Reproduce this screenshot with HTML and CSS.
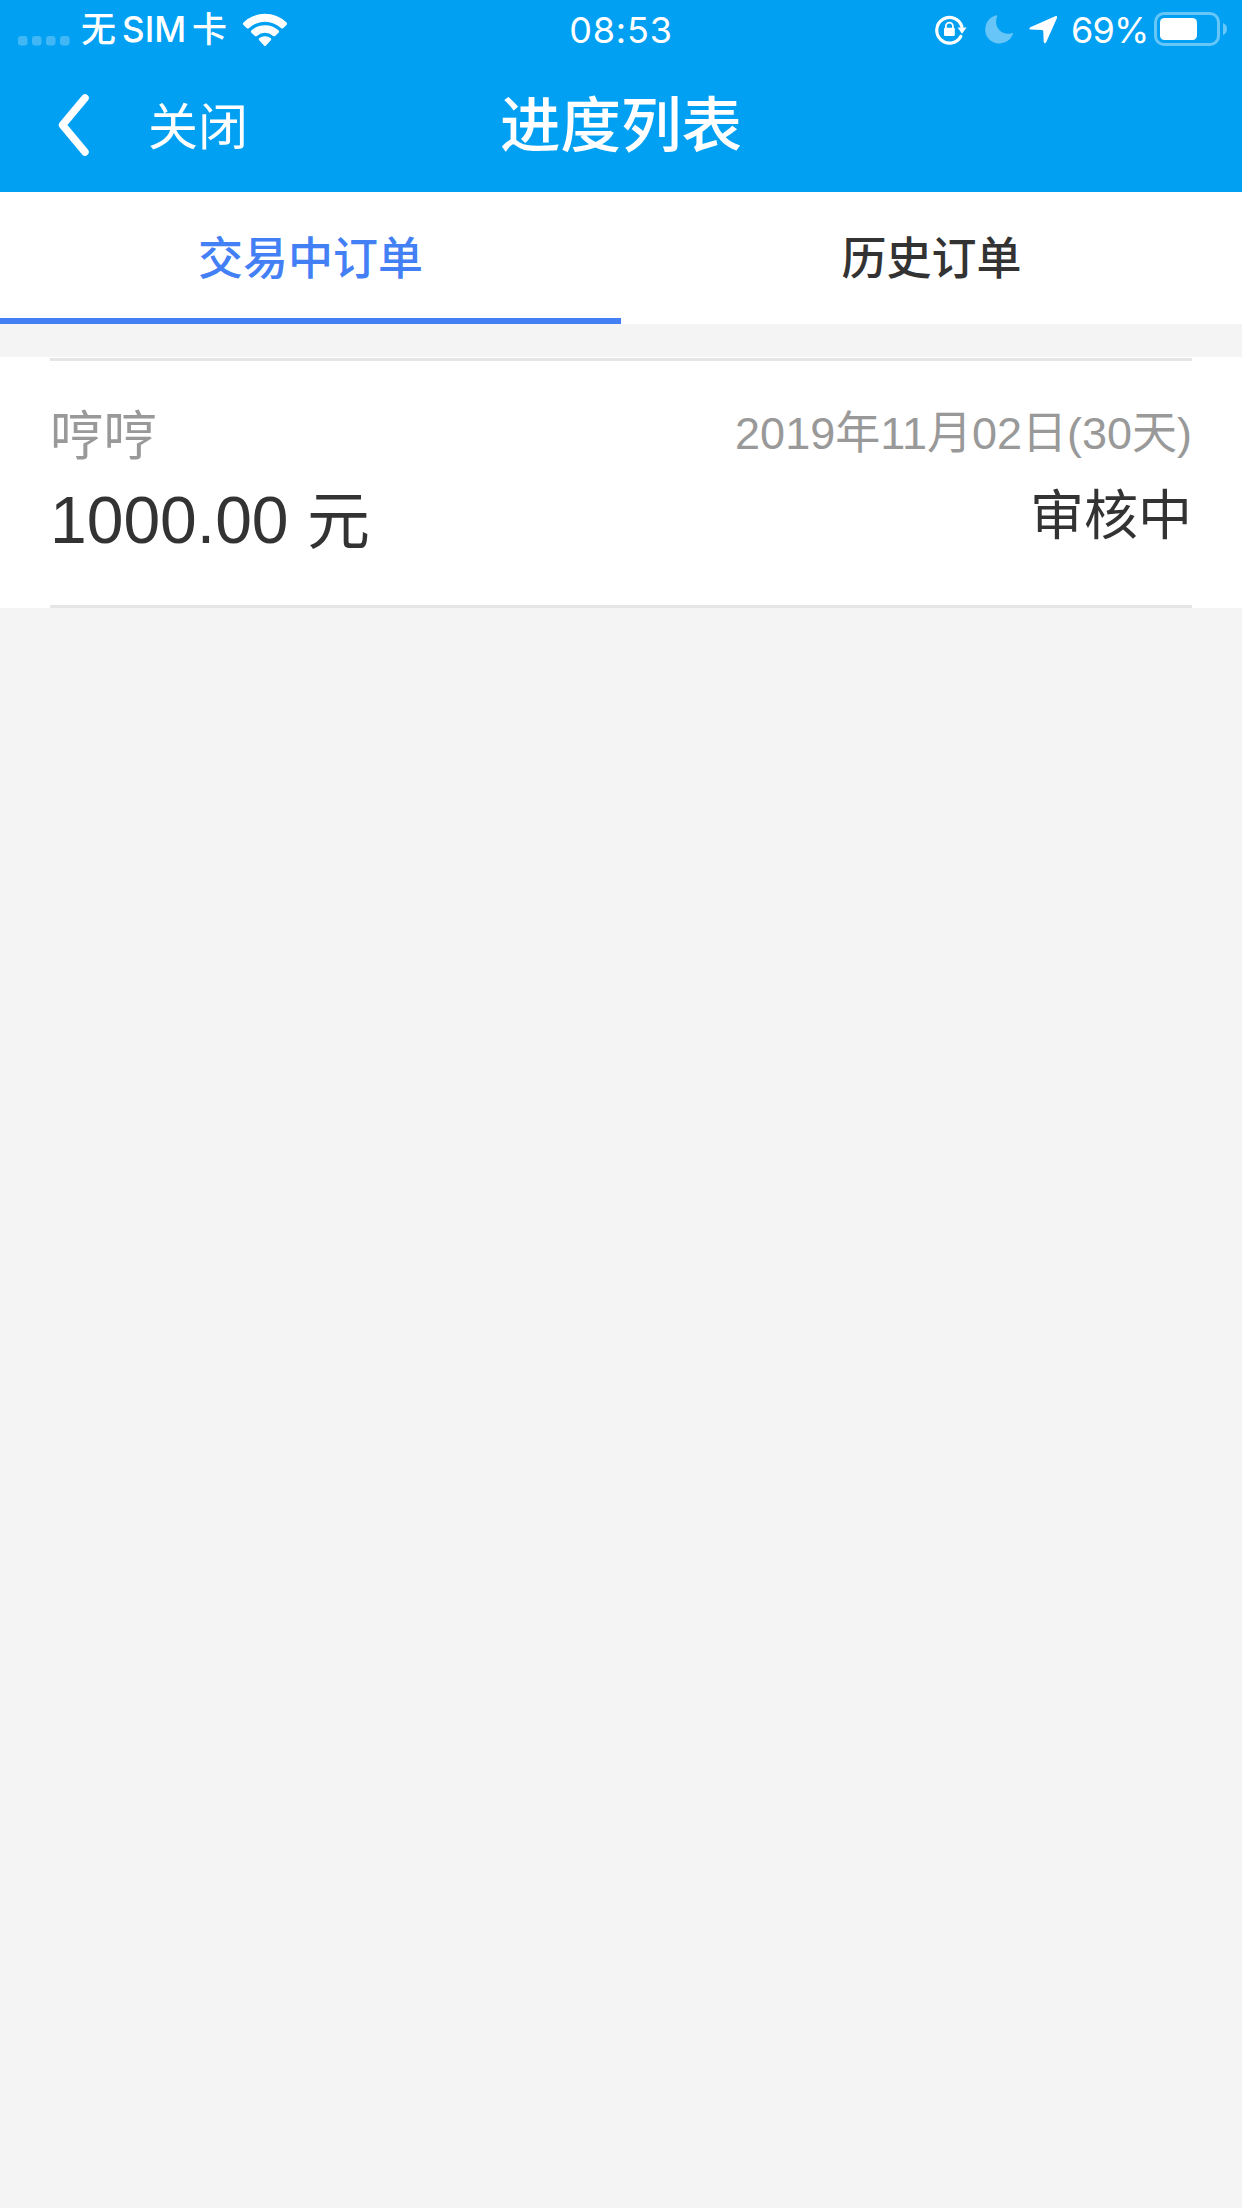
FILE: index.html
```html
<!DOCTYPE html>
<html lang="zh-CN">
<head>
<meta charset="utf-8">
<title>进度列表</title>
<link rel="stylesheet" href="styles.css">
</head>
<body>
<header class="header">
  <div class="status">
    <div class="status-left">
      <svg class="signal" width="52" height="10" viewBox="0 0 52 10"><rect width="9.5" height="9.5" rx="3"/><rect x="14" width="9.5" height="9.5" rx="3"/><rect x="28" width="9.5" height="9.5" rx="3"/><rect x="42" width="9.5" height="9.5" rx="3"/></svg>
      <span class="carrier"><span>无</span><span>SIM</span><span>卡</span></span>
      <svg class="wifi" width="46" height="34" viewBox="0 0 46 34"><path d="M1.5 9.5Q.3 10.7 1.5 11.9L4.7 15.1Q5.8 16.1 7 15.1A23.5 23.5 0 0 1 39 15.1Q40.2 16.1 41.300 15.100L44.500 11.900Q45.700 10.700 44.500 9.500A31 31 0 0 0 1.500 9.500Z"/><path d="M9.300 17.600Q8.400 18.700 9.400 19.700L12.600 22.800Q13.700 23.800 14.900 22.900A12.300 12.300 0 0 1 31.100 22.900Q32.300 23.800 33.400 22.800L36.600 19.700Q37.600 18.700 36.700 17.600A20.200 20.200 0 0 0 9.300 17.600Z"/><path d="M17.100 25.300Q16.200 26.300 17.200 27.300L22 32.500Q23 33.500 24 32.500L28.800 27.300Q29.800 26.300 28.900 25.300A9.500 9.500 0 0 0 17.100 25.300Z"/></svg>
    </div>
    <time class="clock">08:53</time>
    <div class="status-right">
      <svg class="lock" width="32" height="30" viewBox="0 0 32 30"><path d="M25.800 21.500A12.800 12.800 0 1 1 26.800 11.500" fill="none" stroke="#fff" stroke-width="3.200" stroke-linecap="round"/><path d="M22.600 12.500H31.500L27 18.800Z"/><path d="M10.900 13V11.200a3.500 3.500 0 0 1 7 0V13" fill="none" stroke="#fff" stroke-width="1.800"/><rect x="9" y="12.700" width="10.800" height="8.300" rx="1.300"/></svg>
      <svg class="moon" width="29" height="29" viewBox="0 0 29 29"><path d="M11.800.2A14.300 14.300 0 1 0 28.200 18Q27.800 17.700 27.300 18C17.500 21.700 7.500 12.500 12.300.9Q12.500.2 11.800.2Z"/></svg>
      <svg class="location" width="29" height="28" viewBox="0 0 29 28"><path d="M26.200.3L1.300 11.300Q-.7 12.700 1.300 13.600L13.100 13.900Q14.200 14.100 14.300 15.200L14.700 26Q15.700 28.300 17.200 26.300L28 2Q28.500-.5 26.200.3Z"/></svg>
      <span class="percent">69%</span>
      <svg class="battery" width="75" height="35" viewBox="0 0 75 35"><rect x="1.500" y="1.500" width="63" height="31" rx="8.500" fill="none" stroke="#fff" stroke-width="3" opacity=".4"/><rect x="6" y="6" width="37" height="22" rx="4.500"/><path d="M69 11Q73 12.500 73 17T69 23Z" opacity=".4"/></svg>
    </div>
  </div>
  <nav class="navbar">
    <div class="nav-actions">
      <svg class="back" width="34" height="64" viewBox="0 0 34 64"><path d="M28 5L5.500 32L28 59" fill="none" stroke="#fff" stroke-width="7.500" stroke-linecap="round" stroke-linejoin="round"/></svg>
      <span class="close">关闭</span>
    </div>
    <h1 class="title">进度列表</h1>
    <div></div>
  </nav>
</header>
<div class="tabs">
  <div class="tab tab-active">交易中订单</div>
  <div class="tab">历史订单</div>
</div>
<main class="list">
  <article class="order">
    <div class="order-body">
      <div class="order-row">
        <span class="name">哼哼</span>
        <span class="date">2019年11月02日(30天)</span>
      </div>
      <div class="order-row">
        <span class="amount">1000.00 <span class="unit">元</span></span>
        <span class="state">审核中</span>
      </div>
    </div>
  </article>
</main>
</body>
</html>
```
FILE: styles.css
```css
* { box-sizing: border-box; }
body {
  margin: 0;
  min-height: 2208px;
  background: #f4f4f4;
  color: #333;
  font-family: "Liberation Sans", "Noto Sans CJK SC", sans-serif;
}
svg { display: block; flex: none; fill: #fff; }
.header { height: 192px; background: #01a0f2; color: #fff; }
.status, .navbar { display: grid; grid-template-columns: 1fr auto 1fr; }
.status {
  height: 60px;
  font: 400 36px/60px Inter, "Noto Sans CJK SC", sans-serif;
}
.status-left, .status-right { display: flex; align-items: flex-start; }
.status-right { justify-content: flex-end; padding-right: 13px; }
.signal { margin: 36px 0 0 18px; opacity: .25; }
.carrier { display: flex; gap: 6px; margin-left: 11px; font-weight: 500; font-size: 35px; line-height: 59px; }
.wifi { margin: 13px 0 0 15px; }
.clock { letter-spacing: .8px; }
.lock { margin: 15px 18px 0 0; }
.moon { margin: 15px 15px 0 0; opacity: .4; }
.location { margin: 16px 13px 0 0; }
.percent { width: 77px; letter-spacing: -.8px; white-space: nowrap; }
.battery { margin: 12px 0 0 6px; }
.navbar { height: 132px; }
.nav-actions { display: flex; }
.back { margin: 33px 0 0 57px; }
.close { margin-left: 57px; font-size: 50px; line-height: 137px; }
.title { margin: 0; font-size: 60.500px; font-weight: 500; line-height: 132px; }
.tabs {
  display: grid;
  grid-template-columns: 1fr 1fr;
  grid-template-rows: 132px;
  background: #fff;
}
.tab {
  border-bottom: 6px solid transparent;
  font-size: 45px;
  font-weight: 500;
  line-height: 136px;
  text-align: center;
}
.tab-active { color: #4380f5; border-color: #4380f5; }
.list { padding-top: 33px; }
.order { height: 251px; padding: 1px 50px 0; background: #fff; }
.order-body { height: 250px; padding-top: 36px; border: solid #e5e5e5; border-width: 3px 0; }
.order-row { display: flex; justify-content: space-between; height: 81px; }
.name { color: #999; font-size: 53.500px; line-height: 80px; }
.date { color: #999; font-size: 45px; line-height: 74px; }
.amount { font-size: 66px; line-height: 85px; }
.unit { font-size: 63px; }
.state { font-size: 54px; line-height: 77px; }
```
